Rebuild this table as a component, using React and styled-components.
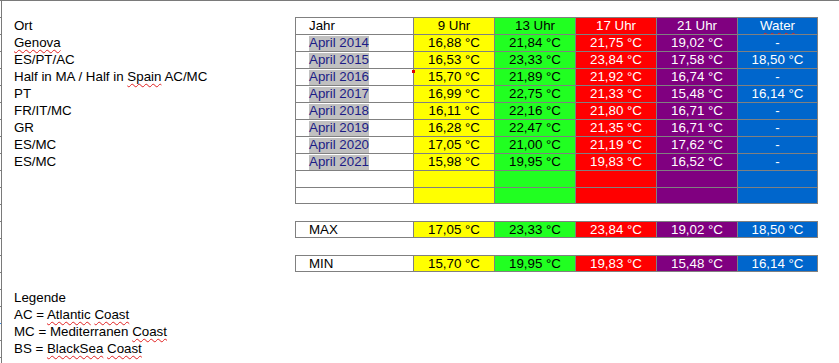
import React from "react";
import styled, { createGlobalStyle } from "styled-components";

const Global = createGlobalStyle`
  html, body { margin: 0; padding: 0; background: #ffffff; }
  body { font-family: "Liberation Sans", Arial, sans-serif; font-size: 13.33px; color: #000; }
  * { box-sizing: border-box; }
`;

const LINE = "#808080";
const ROW = 17;

const Frame = styled.div`
  display: flex;
  width: 839px;
  height: 363px;
  border-top: 1px solid #7a7a7a;
  overflow: hidden;
`;

const Ruler = styled.div`
  display: flex;
  flex-direction: column;
  width: 2px;
  border-right: 1px solid #7a7a7a;
  flex: none;
`;

const Tick = styled.div`
  height: ${ROW}px;
  flex: none;
  width: 1px;
  border-bottom: 1px solid ${(p) => (p.$blue ? "#3a8ee6" : LINE)};
`;

const Sheet = styled.div`
  display: grid;
  grid-template-columns: 293px 118px repeat(5, 81px);
  grid-auto-rows: ${ROW}px;
  grid-template-rows: 16px;
  align-content: start;
`;

const Label = styled.div`
  grid-column: 1;
  grid-row: ${(p) => p.$row};
  padding-left: 12px;
  white-space: nowrap;
  line-height: 17px;
`;

const Spell = styled.span`
  text-decoration: underline wavy #e02020;
  text-decoration-thickness: 1px;
  text-underline-offset: 2px;
  text-decoration-skip-ink: none;
`;

const Cell = styled.div`
  position: relative;
  grid-column: ${(p) => p.$col};
  grid-row: ${(p) => p.$row};
  border-top: 1px solid ${LINE};
  border-left: 1px solid ${LINE};
  border-right: ${(p) => (p.$last ? `1px solid ${LINE}` : "none")};
  border-bottom: ${(p) => (p.$bottom ? `1px solid ${LINE}` : "none")};
  background: ${(p) => p.$bg || "#ffffff"};
  color: ${(p) => p.$fg || "#000000"};
  display: flex;
  align-items: center;
  justify-content: ${(p) => (p.$left ? "flex-start" : "center")};
  padding-left: ${(p) => (p.$left ? "13px" : "0")};
  white-space: nowrap;
  line-height: 1;
`;

const Highlight = styled.span`
  background: #c0c0c0;
  color: #1c1c86;
  height: 15px;
  display: inline-flex;
  align-items: center;
`;

const Marker = styled.span`
  position: absolute;
  right: -2px;
  top: 1px;
  width: 3px;
  height: 3px;
  background: #e00000;
  z-index: 2;
`;

const COLS = [
  { name: "9 Uhr", bg: "#ffff00", fg: "#000000" },
  { name: "13 Uhr", bg: "#21ff21", fg: "#000000" },
  { name: "17 Uhr", bg: "#ff0000", fg: "#ffffff" },
  { name: "21 Uhr", bg: "#800080", fg: "#ffffff" },
  { name: "Water", bg: "#0066cc", fg: "#ffffff", spell: true },
];

const DATA = [
  ["April 2014", "16,88 °C", "21,84 °C", "21,75 °C", "19,02 °C", "-"],
  ["April 2015", "16,53 °C", "23,33 °C", "23,84 °C", "17,58 °C", "18,50 °C"],
  ["April 2016", "15,70 °C", "21,89 °C", "21,92 °C", "16,74 °C", "-"],
  ["April 2017", "16,99 °C", "22,75 °C", "21,33 °C", "15,48 °C", "16,14 °C"],
  ["April 2018", "16,11 °C", "22,16 °C", "21,80 °C", "16,71 °C", "-"],
  ["April 2019", "16,28 °C", "22,47 °C", "21,35 °C", "16,71 °C", "-"],
  ["April 2020", "17,05 °C", "21,00 °C", "21,19 °C", "17,62 °C", "-"],
  ["April 2021", "15,98 °C", "19,95 °C", "19,83 °C", "16,52 °C", "-"],
];

const SUMMARY = [
  { row: 14, label: "MAX", values: ["17,05 °C", "23,33 °C", "23,84 °C", "19,02 °C", "18,50 °C"] },
  { row: 16, label: "MIN", values: ["15,70 °C", "19,95 °C", "19,83 °C", "15,48 °C", "16,14 °C"] },
];

const PLACES = [
  <>Ort</>,
  <Spell>Genova</Spell>,
  <>ES/PT/AC</>,
  <>Half in MA / Half in <Spell>Spain</Spell> AC/MC</>,
  <>PT</>,
  <>FR/IT/MC</>,
  <>GR</>,
  <>ES/MC</>,
  <>ES/MC</>,
];

const LEGEND = [
  <>Legende</>,
  <>AC = <Spell>Atlantic</Spell> <Spell>Coast</Spell></>,
  <>MC = Mediterranen <Spell>Coast</Spell></>,
  <>BS = <Spell>BlackSea</Spell> <Spell>Coast</Spell></>,
];

function ValueCells({ row, values, bottom }) {
  return values.map((v, i) => (
    <Cell
      key={i}
      $col={i + 3}
      $row={row}
      $bg={COLS[i].bg}
      $fg={COLS[i].fg}
      $last={i === 4}
      $bottom={bottom}
    >
      {v}
    </Cell>
  ));
}

export default function App() {
  const ticks = Array.from({ length: 22 }, (_, i) => i);
  return (
    <>
      <Global />
      <Frame>
        <Ruler>
          {ticks.map((i) => (
            <Tick key={i} $blue={i === 18} />
          ))}
        </Ruler>
        <Sheet>
          {PLACES.map((p, i) => (
            <Label key={i} $row={i + 2}>
              {p}
            </Label>
          ))}

          <Cell $col={2} $row={2} $left>
            Jahr
          </Cell>
          {COLS.map((c, i) => (
            <Cell key={c.name} $col={i + 3} $row={2} $bg={c.bg} $fg={c.fg} $last={i === 4}>
              {c.spell ? <Spell>{c.name}</Spell> : c.name}
            </Cell>
          ))}

          {DATA.map((r, ri) => (
            <React.Fragment key={r[0]}>
              <Cell $col={2} $row={ri + 3} $left>
                <Highlight>{r[0]}</Highlight>
                {ri === 2 && <Marker />}
              </Cell>
              <ValueCells row={ri + 3} values={r.slice(1)} />
            </React.Fragment>
          ))}

          {[11, 12].map((row) => (
            <React.Fragment key={row}>
              <Cell $col={2} $row={row} $bottom={row === 12} />
              <ValueCells row={row} values={["", "", "", "", ""]} bottom={row === 12} />
            </React.Fragment>
          ))}

          {SUMMARY.map((s) => (
            <React.Fragment key={s.label}>
              <Cell $col={2} $row={s.row} $left $bottom>
                {s.label}
              </Cell>
              <ValueCells row={s.row} values={s.values} bottom />
            </React.Fragment>
          ))}

          {LEGEND.map((l, i) => (
            <Label key={i} $row={i + 18}>
              {l}
            </Label>
          ))}
        </Sheet>
      </Frame>
    </>
  );
}
